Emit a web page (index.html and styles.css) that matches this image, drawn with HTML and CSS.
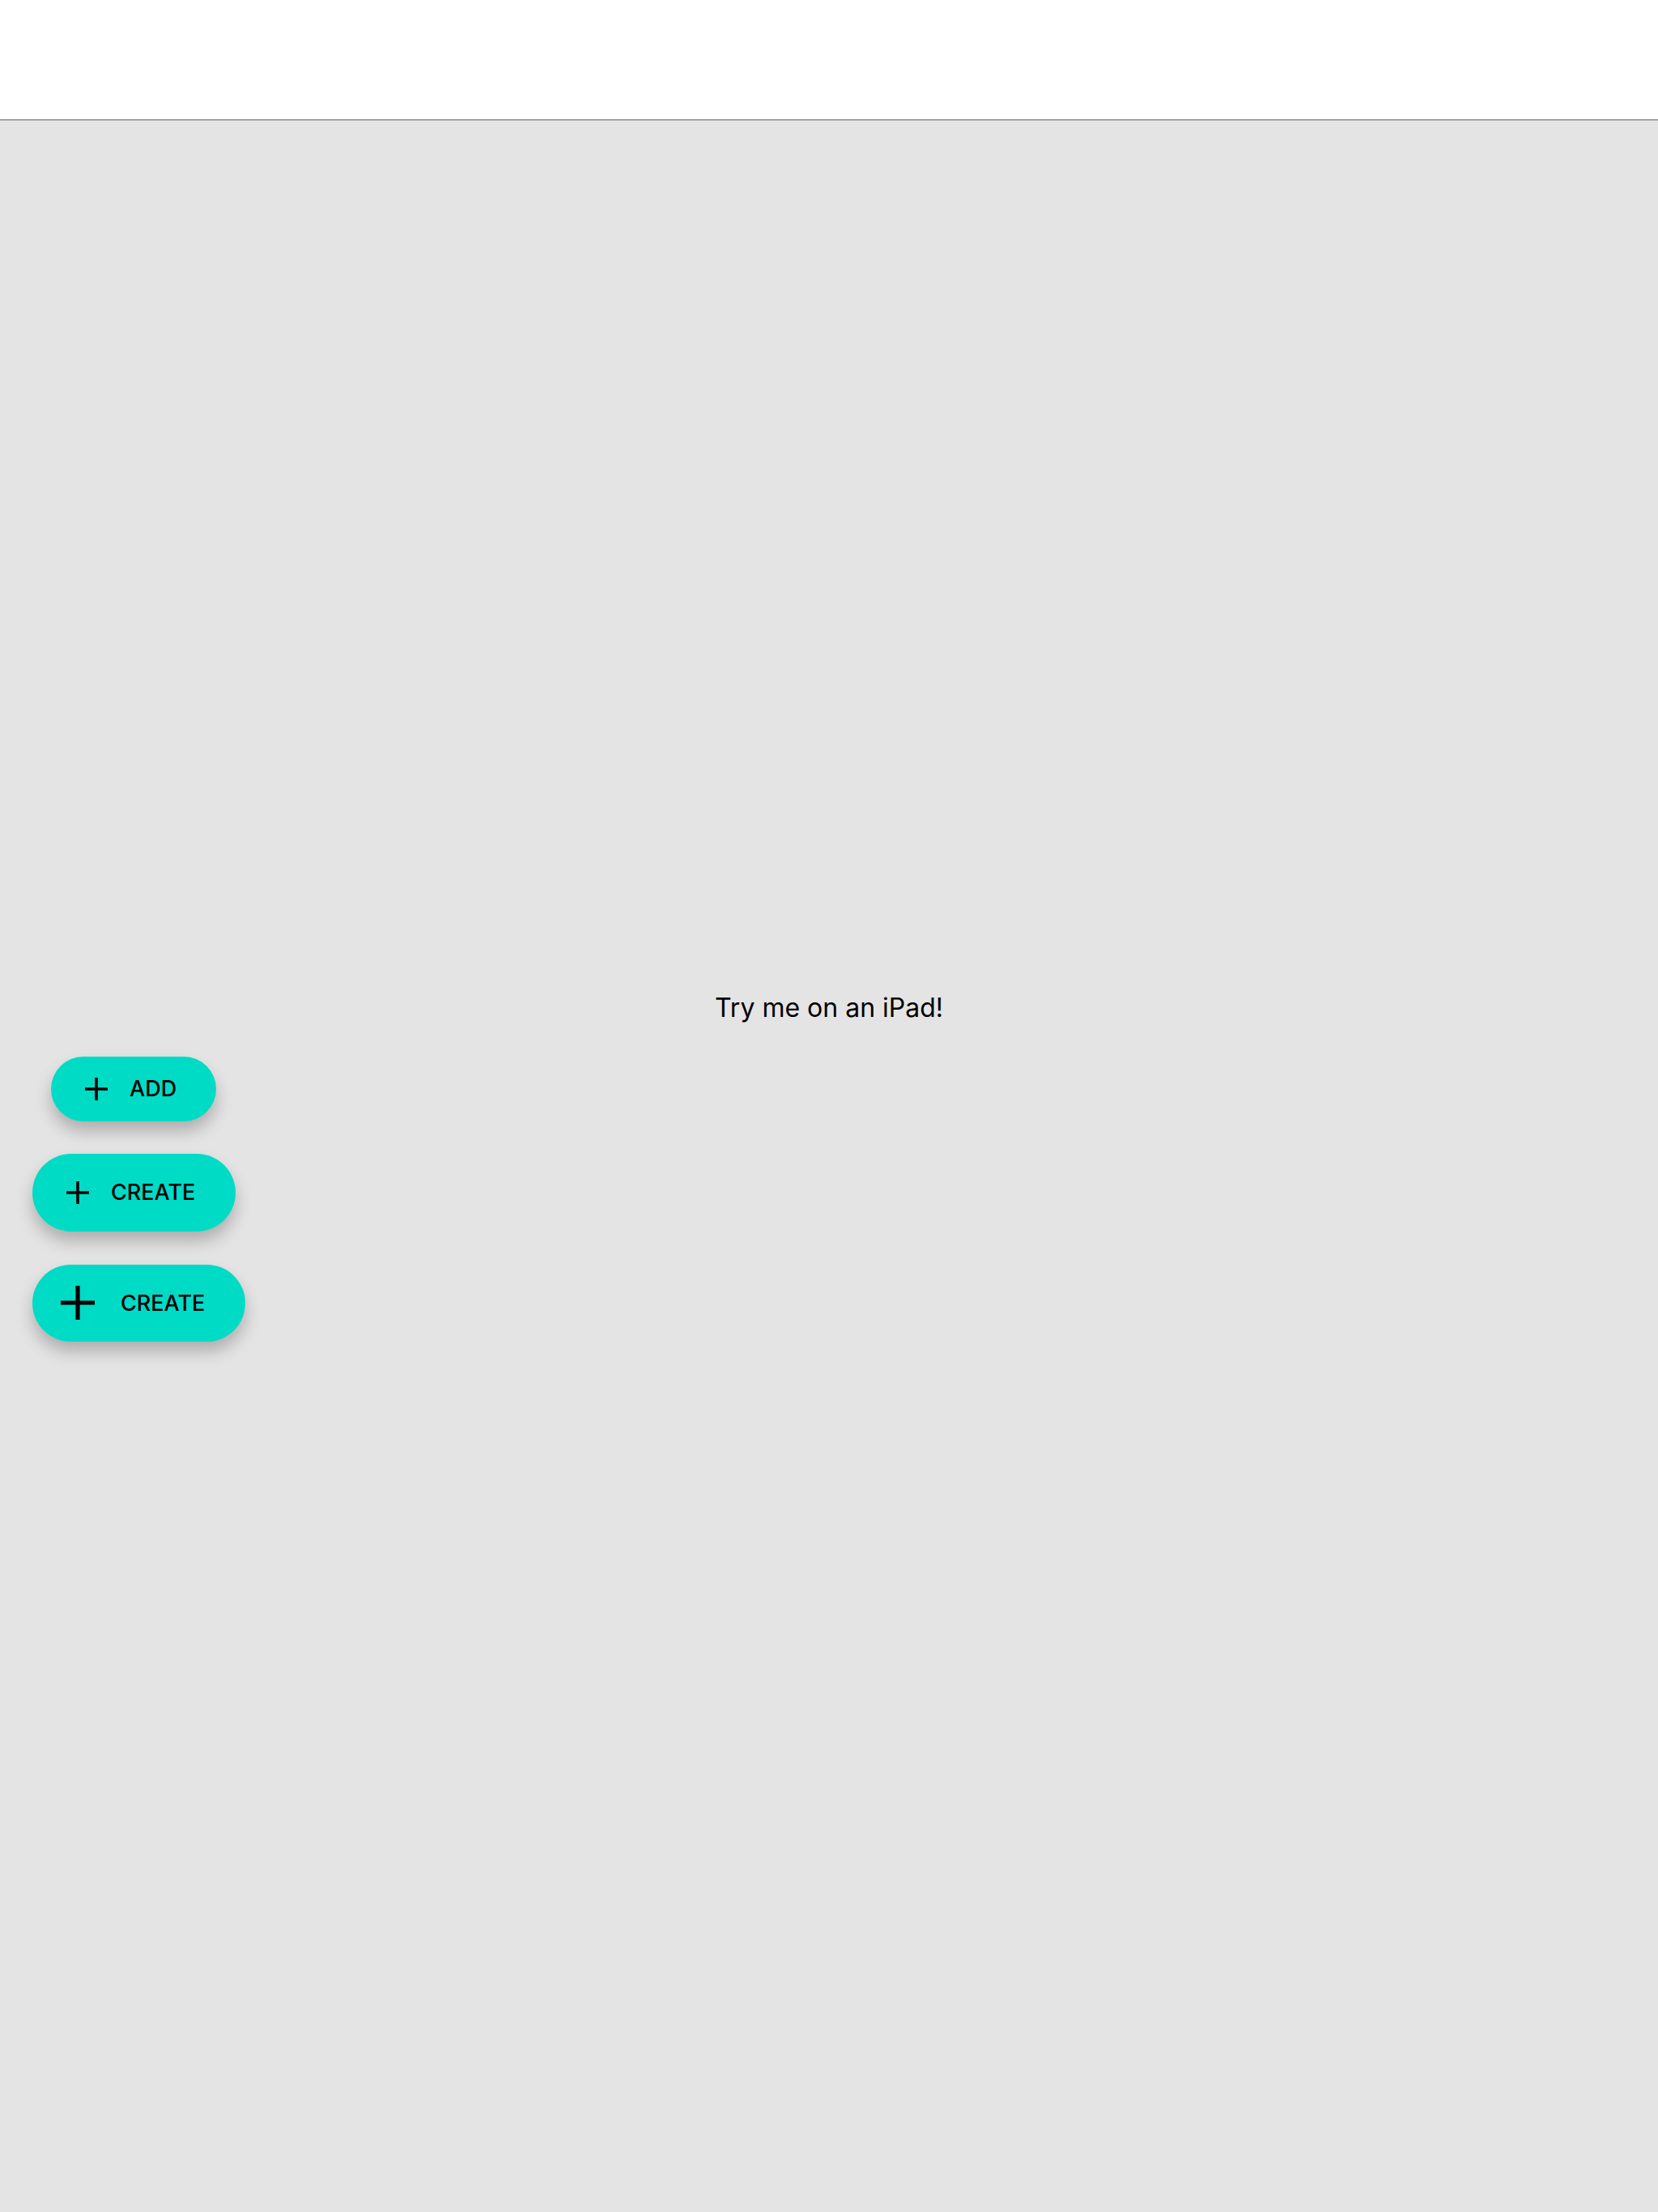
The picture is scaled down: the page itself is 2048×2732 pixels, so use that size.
FILE: index.html
```html
<!DOCTYPE html>
<html lang="en">
<head>
<meta charset="utf-8">
<title>Try me on an iPad!</title>
<link rel="stylesheet" href="styles.css">
</head>
<body>
<header class="topbar"></header>
<main class="stage">
  <div class="content">
    <p class="hint">Try me on an iPad!</p>
    <button class="fab fab-add">
      <svg class="plus" viewBox="0 0 28 28" width="28" height="28"><path d="M14 0V28M0 14H28" stroke="#000" stroke-width="3.6" fill="none"/></svg>
      <span class="label">ADD</span>
    </button>
    <button class="fab fab-create">
      <svg class="plus" viewBox="0 0 28 28" width="28" height="28"><path d="M14 0V28M0 14H28" stroke="#000" stroke-width="3.6" fill="none"/></svg>
      <span class="label">CREATE</span>
    </button>
    <button class="fab fab-create-lg">
      <svg class="plus plus-lg" viewBox="0 0 42 42" width="42" height="42"><path d="M21 0V42M0 21H42" stroke="#000" stroke-width="5.2" fill="none"/></svg>
      <span class="label">CREATE</span>
    </button>
  </div>
</main>
</body>
</html>
```
FILE: styles.css
```css
html, body {
  margin: 0;
  padding: 0;
}
body {
  width: 2048px;
  height: 2732px;
  display: flex;
  flex-direction: column;
  background: #e4e4e4;
  font-family: Inter, "Noto Sans", sans-serif;
  color: #000;
}
.topbar {
  height: 147px;
  background: #ffffff;
  border-bottom: 2px solid #a4a4a4;
  flex: none;
}
.stage {
  flex: 1;
  display: flex;
  flex-direction: column;
  justify-content: center;
}
.content {
  display: flex;
  flex-direction: column;
  align-items: flex-start;
}
.hint {
  align-self: stretch;
  margin: 0 0 40px 0;
  text-align: center;
  font-size: 32px;
  line-height: 40px;
}
.fab {
  display: flex;
  align-items: center;
  justify-content: flex-start;
  box-sizing: border-box;
  border: none;
  border-radius: 999px;
  background: #00dbc6;
  box-shadow: 0 12px 20px rgba(0, 0, 0, 0.24);
  font-family: Inter, "Noto Sans", sans-serif;
  font-size: 27px;
  font-weight: 500;
  color: #000;
  padding: 0 0 0 42px;
  gap: 27px;
  cursor: pointer;
  white-space: nowrap;
}
.plus {
  display: block;
  flex: none;
}
.label {
  line-height: 1;
}
.fab-add {
  width: 204px;
  height: 80px;
  margin-left: 63px;
  margin-bottom: 40px;
}
.fab-create {
  width: 251px;
  height: 96px;
  margin-left: 40px;
  margin-bottom: 41px;
}
.fab-create-lg {
  width: 263px;
  height: 95px;
  margin-left: 40px;
  padding-left: 35px;
  gap: 32px;
}
```
